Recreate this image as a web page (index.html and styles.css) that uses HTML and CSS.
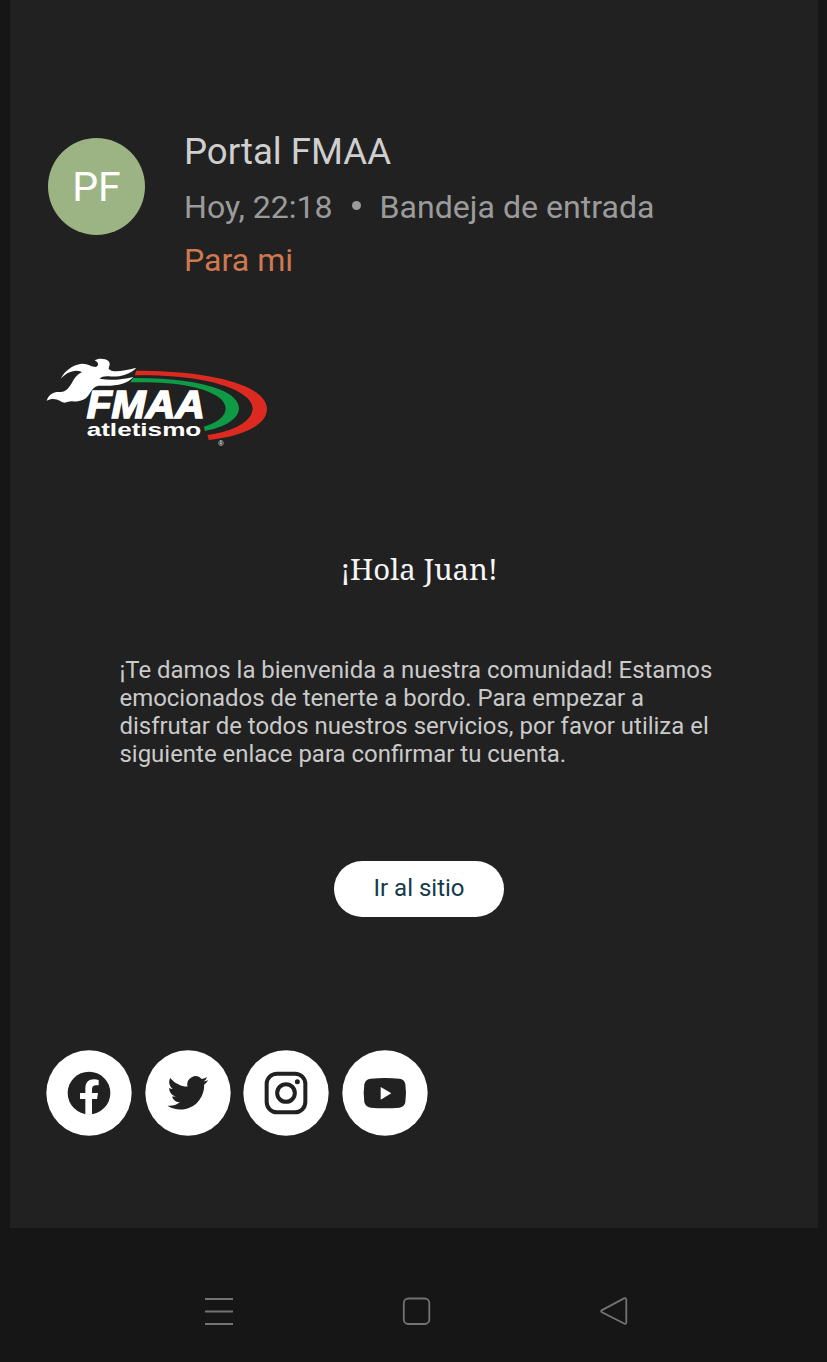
FILE: index.html
```html
<!DOCTYPE html>
<html lang="es">
<head>
<meta charset="utf-8">
<title>Portal FMAA</title>
<link rel="stylesheet" href="styles.css">
</head>
<body>
<main class="mail">
  <header class="sender">
    <div class="avatar"><span>PF</span></div>
    <div class="meta">
      <div class="name">Portal FMAA</div>
      <div class="info"><span class="time">Hoy, 22:18</span><i class="dot"></i><span class="folder">Bandeja de entrada</span></div>
      <div class="to">Para mi</div>
    </div>
  </header>
  <svg class="logo" viewBox="0 0 720 330" role="img" aria-label="FMAA atletismo">
    <path fill="#dc2a20" d="M289 77C420 77 540 91 615 124C660 144 681 168 681 193C680 240 610 274 506 285L503 270C585 258 636 228 638 191C638 155 580 125 500 108C430 94 360 90 284 91Z"/>
    <path fill="#0f9a45" d="M279 99C390 98 480 110 538 133C576 148 597 169 597 190C596 220 560 246 495 258L491 245C535 233 557 213 557 190C557 159 510 137 455 125C400 113 340 111 271 112Z"/>
    <path fill="#fff" d="M62 101C74 78 96 60 125 56C143 55 153 65 168 66C177 62 177 53 164 46C174 39 197 40 205 48C213 55 207 64 206 71C216 83 244 80 289 68C270 90 233 97 207 94C193 93 185 95 179 101C208 107 243 105 280 96C263 117 224 125 181 122C166 122 158 130 150 144C137 168 115 171 92 169C77 171 75 177 62 169C47 160 34 160 20 167C27 146 42 139 62 141C78 140 87 128 96 113C104 99 109 90 126 81C113 76 101 76 89 82C76 87 71 94 62 101Z"/>
    <text class="logo-name" x="140" y="220" textLength="354" lengthAdjust="spacingAndGlyphs">FMAA</text>
    <text class="logo-sport" x="140" y="273" textLength="344" lengthAdjust="spacingAndGlyphs">atletismo</text>
    <text class="logo-mark" x="535" y="302">®</text>
  </svg>
  <h1 class="greeting"><span>¡Hola Juan!</span></h1>
  <p class="welcome">¡Te damos la bienvenida a nuestra comunidad! Estamos<br>emocionados de tenerte a bordo. Para empezar a<br>disfrutar de todos nuestros servicios, por favor utiliza el<br>siguiente enlace para confirmar tu cuenta.</p>
  <a class="button">Ir al sitio</a>
  <nav class="social">
    <svg viewBox="0 0 258 258"><circle cx="129" cy="129" r="128" fill="#fff"/><circle cx="129" cy="129" r="64" fill="#212121"/><path fill="#fff" d="M118 194V147H102V129H118V115C118 97 128 88 144 88Q152 88 158 90V106H150C141 106 138 111 138 118V129H156L153 147H138V194Z"/></svg>
    <svg viewBox="0 0 258 258"><circle cx="129" cy="129" r="128" fill="#fff"/><path fill="#212121" transform="translate(67.500 67.500) scale(5.100)" d="M23.950 4.570a10 10 0 01-2.820.775 4.958 4.958 0 002.163-2.723c-.951.555-2.005.959-3.127 1.184a4.920 4.920 0 00-8.384 4.482C7.690 8.095 4.067 6.130 1.640 3.162a4.822 4.822 0 00-.666 2.475c0 1.710.870 3.213 2.188 4.096a4.904 4.904 0 01-2.228-.616v.060a4.923 4.923 0 003.946 4.827 4.996 4.996 0 01-2.212.085 4.936 4.936 0 004.604 3.417 9.867 9.867 0 01-6.102 2.105c-.39 0-.779-.023-1.170-.067a13.995 13.995 0 007.557 2.209c9.053 0 13.998-7.496 13.998-13.985 0-.21 0-.42-.015-.63A9.935 9.935 0 0024 4.590z"/></svg>
    <svg viewBox="0 0 258 258"><circle cx="129" cy="129" r="128" fill="#fff"/><rect x="71" y="71" width="116" height="116" rx="31" fill="none" stroke="#212121" stroke-width="12"/><circle cx="129" cy="129" r="26.500" fill="none" stroke="#212121" stroke-width="12"/><circle cx="163" cy="95" r="7.500" fill="#212121"/></svg>
    <svg viewBox="0 0 258 258"><circle cx="129" cy="129" r="128" fill="#fff"/><path fill="#212121" d="M86 86Q129 82 172 86Q187 87 190 102Q194 129 190 157Q187 172 172 173Q129 177 86 173Q71 172 67 157Q63 129 67 102Q71 87 86 86Z"/><path fill="#fff" d="M116 111V149L148 130Z"/></svg>
  </nav>
</main>
<footer class="system">
  <svg viewBox="0 0 30 30"><path d="M1 3H29M1 15.500H29M1 28H29"/></svg>
  <svg viewBox="0 0 30 30"><rect x="1.800" y="2.500" width="25.500" height="25.500" rx="4.500"/></svg>
  <svg viewBox="0 0 30 30"><path d="M2 14.100L24 2.400Q26.300 1.500 26.300 4.300V26Q26.300 28.700 24 27.500L2 16.200Q.2 15.100 2 14.100Z"/></svg>
</footer>
</body>
</html>
```
FILE: styles.css
```css
* { box-sizing: border-box; }
body { margin: 0; height: 1362px; background: #161616; font-family: Roboto, sans-serif; overflow: hidden; }
.mail { display: flex; flex-direction: column; width: 808px; height: 1228px; margin-left: 10px; padding: 124px 36px 0; background: #212121; }
.sender { display: flex; gap: 39px; padding-left: 2px; }
.avatar { display: flex; align-items: center; justify-content: center; width: 97px; height: 97px; margin-top: 14px; border-radius: 50%; background: #9cb384; color: #fff; font-size: 41px; }
.meta { display: flex; flex-direction: column; }
.name { height: 56px; line-height: 55px; font-size: 36.600px; color: #cfcfcf; }
.info { display: flex; align-items: center; height: 54px; font-size: 32.100px; color: #9b9b9b; }
.dot { width: 9px; height: 9px; margin: -2px 19px 2px 19px; border-radius: 50%; background: #9b9b9b; }
.to { height: 52px; line-height: 52px; font-size: 32.100px; color: #d0784f; }
.logo { width: 240px; height: 110px; margin: 59px 0 0 -6px; }
.logo-name { font: italic 700 117px "Liberation Sans", sans-serif; fill: #fff; stroke: #fff; stroke-width: 5; }
.logo-sport { font: 700 53px "Liberation Sans", sans-serif; fill: #fff; }
.logo-mark { font: 22px "Liberation Sans", sans-serif; fill: #fff; }
.greeting { align-self: center; margin: 92px 0 0 10px; font: 400 29.300px/44px "Noto Serif", "DejaVu Serif Condensed", "DejaVu Serif", serif; color: #f5f5f5; white-space: nowrap; }
.welcome { margin: 65px 0 0 73.500px; font-size: 23.950px; line-height: 28px; color: #cacaca; white-space: nowrap; }
.button { align-self: center; width: 170px; height: 56px; margin: 93px 0 0 10px; border-radius: 28px; background: #fff; color: #153b49; font-size: 24px; line-height: 55px; text-align: center; }
.social { display: flex; gap: 12.500px; margin-top: 132.500px; }
.social svg { width: 86px; height: 86px; }
.system { display: flex; gap: 168px; padding: 68px 0 0 204px; }
.system svg { width: 30px; height: 30px; fill: none; stroke: #737373; stroke-width: 1.800; }
```
